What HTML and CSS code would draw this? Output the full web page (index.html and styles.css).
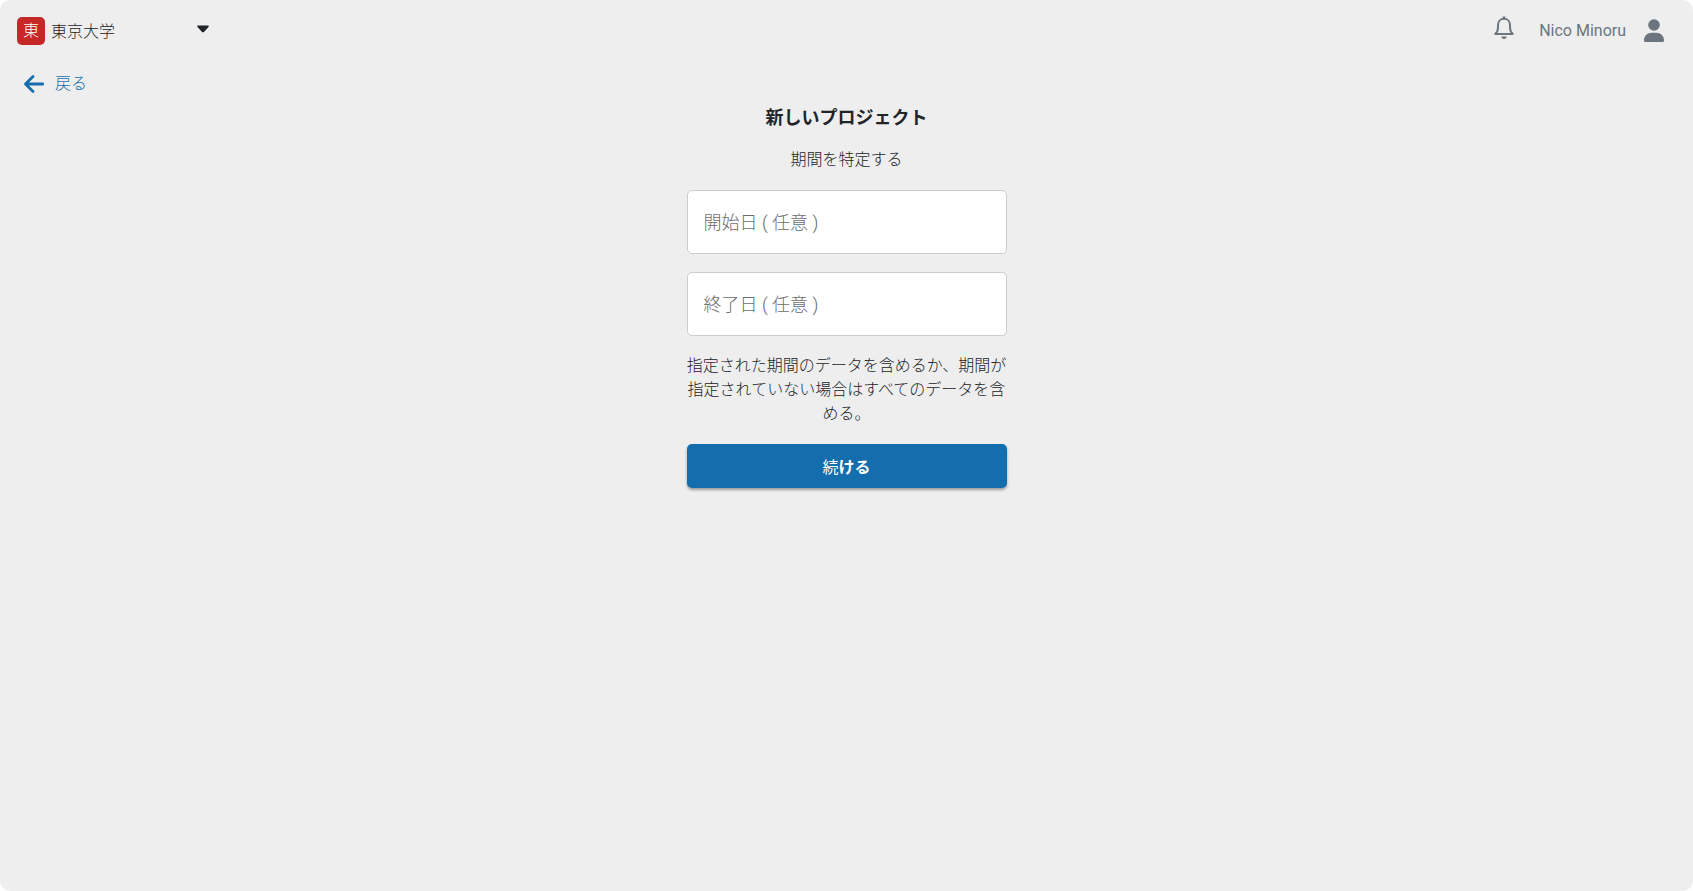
FILE: index.html
```html
<!DOCTYPE html>
<html lang="ja">
<head>
    <meta charset="UTF-8">
    <meta name="viewport" content="width=device-width, initial-scale=1.0">
    <title>新しいプロジェクト</title>
    <link rel="stylesheet" href="styles.css">
</head>
<body>
    <div class="page">
        <header class="header">
            <div class="org">
                <span class="org-logo">東</span>
                <div class="org-picker">
                    <select class="org-select" aria-label="組織">
                        <option>東京大学</option>
                    </select>
                    <svg class="caret" viewBox="0 0 12 8" aria-hidden="true">
                        <path d="M1.2 0.5h9.6c.9 0 1.3 1 .7 1.6L7 6.9c-.5.6-1.5.6-2 0L.5 2.1C-.1 1.5.3.5 1.2.5z"/>
                    </svg>
                </div>
            </div>
            <div class="account">
                <button class="icon-button" type="button" aria-label="通知">
                    <svg class="bell" viewBox="0 0 20 24" aria-hidden="true">
                        <path class="bell-line" d="M1.3 18h17.4c-2-1.8-2.7-3.5-2.7-6.5V9c0-3.500-2.500-6.200-6-6.200S4 5.500 4 9v2.500c0 3-.7 4.700-2.700 6.500z"/>
                        <path d="M8.700.5h2.600v2.500H8.700zM7.300 20.500h5.400c0 1.500-1.200 2.500-2.700 2.500s-2.700-1-2.700-2.500z"/>
                    </svg>
                </button>
                <span class="user-name">Nico Minoru</span>
                <button class="icon-button" type="button" aria-label="アカウント">
                    <svg class="user" viewBox="0 0 20 24" aria-hidden="true">
                        <circle cx="10" cy="6" r="5.8"/>
                        <path d="M0 21.500c0-4.800 3.600-7.700 7.500-7.700h5c3.900 0 7.500 2.900 7.500 7.700 0 .9-.6 1.500-1.500 1.500h-17C.6 23 0 22.400 0 21.500z"/>
                    </svg>
                </button>
            </div>
        </header>

        <a class="back" href="#">
            <svg class="arrow" viewBox="0 0 20 18" aria-hidden="true">
                <path d="M19 9H1.5M9 1.5L1.5 9 9 16.5"/>
            </svg>
            戻る
        </a>

        <main>
            <form class="project">
                <h1>新しいプロジェクト</h1>
                <p>期間を特定する</p>
                <input class="field" type="text" name="start" placeholder="開始日 ( 任意 )" aria-label="開始日 ( 任意 )">
                <input class="field" type="text" name="end" placeholder="終了日 ( 任意 )" aria-label="終了日 ( 任意 )">
                <p>指定された期間のデータを含めるか、期間が指定されていない場合はすべてのデータを含める。</p>
                <button class="submit" type="submit"><span class="light">続</span>ける</button>
            </form>
        </main>
    </div>
</body>
</html>
```

FILE: styles.css
```css
* {
    box-sizing: border-box;
}
body {
    margin: 0;
    background-color: white;
    color: #212529;
    font-family: Roboto, "Noto Sans CJK JP", sans-serif;
    font-size: 16px;
    font-weight: 300;
    line-height: 24px;
}
button, input, select {
    font-family: inherit;
    font-weight: inherit;
}
.page {
    min-height: 100vh;
    background-color: #eeeeee;
    border-radius: 10px;
}

/* header */
.header {
    display: flex;
    justify-content: space-between;
    align-items: center;
    height: 62px;
    padding: 0 29px 0 17px;
}
.org {
    display: flex;
    align-items: center;
    gap: 6px;
}
.org-logo {
    width: 28px;
    height: 28px;
    border-radius: 5px;
    background-color: #c62828;
    color: white;
    line-height: 28px;
    text-align: center;
}
.org-picker {
    position: relative;
    width: 158px;
}
.org-select {
    appearance: none;
    width: 100%;
    height: 28px;
    padding: 0;
    border: 0;
    background: none;
    color: inherit;
    font-size: 16px;
}
.caret {
    position: absolute;
    top: 8px;
    right: 0;
    width: 12px;
    height: 8px;
    fill: #212529;
    pointer-events: none;
}
.account {
    display: flex;
    align-items: center;
    color: #6c757d;
}
.icon-button {
    display: flex;
    padding: 0;
    border: 0;
    background: none;
    color: inherit;
}
.bell, .user {
    width: 20px;
    height: 24px;
    fill: currentColor;
}
.bell {
    margin-bottom: 6px;
}
.bell-line {
    fill: none;
    stroke: currentColor;
    stroke-width: 2;
    stroke-linejoin: round;
}
.user-name {
    margin: 0 18px 0 25px;
    font-weight: 400;
}

/* back link */
.back {
    display: inline-flex;
    align-items: center;
    gap: 11px;
    margin-left: 24px;
    padding: 10px 0;
    color: #146eae;
    text-decoration: none;
}
.arrow {
    width: 20px;
    height: 18px;
    fill: none;
    stroke: currentColor;
    stroke-width: 2.8;
    stroke-linecap: round;
    stroke-linejoin: round;
}

/* form */
.project {
    display: flex;
    flex-direction: column;
    gap: 18px;
    width: 320px;
    margin: 0 auto;
    text-align: center;
}
h1 {
    margin: 0;
    font-size: 18px;
    font-weight: bold;
    line-height: 24px;
}
p {
    margin: 0;
}
.field {
    height: 64px;
    padding: 0 16px;
    border: 1px solid #cccccc;
    border-radius: 5px;
    background-color: white;
    color: inherit;
    font-size: 18px;
}
.field::placeholder {
    color: #6c6c6c;
}
.submit {
    height: 44px;
    border: 0;
    border-radius: 5px;
    background-color: #146eae;
    box-shadow: 0 2px 3px rgba(0, 0, 0, 0.35);
    color: white;
    font-size: 16px;
    font-weight: bold;
}
.light {
    font-weight: 400;
}
```
